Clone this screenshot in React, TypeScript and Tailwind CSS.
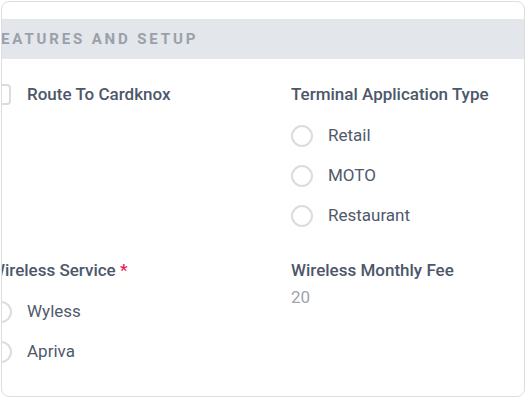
import React from "react"

const font = { fontFamily: "Roboto, 'Liberation Sans', sans-serif" }

function Radio({ label }: { label: string }) {
  return (
    <label className="flex h-10 items-center gap-[15px]">
      <span className="h-[22px] w-[22px] shrink-0 rounded-full border-2 border-[#dcdcdc] bg-white" />
      <span className="text-[17px] text-[#4f596b]">{label}</span>
    </label>
  )
}

function Heading({ children }: { children: React.ReactNode }) {
  return <div className="text-[17px] leading-6 font-medium text-[#4d576a]">{children}</div>
}

export default function App() {
  return (
    <div className="h-[400px] w-[528px] overflow-hidden bg-white pt-px pl-px" style={font}>
      <div className="h-[396px] w-[524px] overflow-hidden rounded-lg border border-[#dedede] bg-white">
        <div className="mt-[17px] flex h-10 items-center bg-[#e3e6ea]">
          <div className="-ml-[12px] text-[15px] font-bold tracking-[0.19em] text-[#9aa0aa]">
            FEATURES AND SETUP
          </div>
        </div>

        <div className="-ml-[12px] grid grid-cols-[301px_1fr] gap-y-[22px] pt-[23px]">
          {/* Route to Cardknox */}
          <div className="flex h-6 items-center gap-4">
            <span className="h-[21px] w-[21px] shrink-0 rounded-[4px] border-2 border-[#dcdcdc]" />
            <Heading>Route To Cardknox</Heading>
          </div>

          {/* Terminal Application Type */}
          <div>
            <Heading>Terminal Application Type</Heading>
            <div className="mt-[10px] flex flex-col">
              <Radio label="Retail" />
              <Radio label="MOTO" />
              <Radio label="Restaurant" />
            </div>
          </div>

          {/* Wireless Service */}
          <div>
            <Heading>
              Wireless Service <span className="text-[#e8194a]">*</span>
            </Heading>
            <div className="mt-[10px] flex flex-col">
              <Radio label="Wyless" />
              <Radio label="Apriva" />
            </div>
          </div>

          {/* Wireless Monthly Fee */}
          <div>
            <Heading>Wireless Monthly Fee</Heading>
            <div className="mt-[3px] text-[17px] leading-6 text-[#a0a4ab]">20</div>
          </div>
        </div>
      </div>
    </div>
  )
}
